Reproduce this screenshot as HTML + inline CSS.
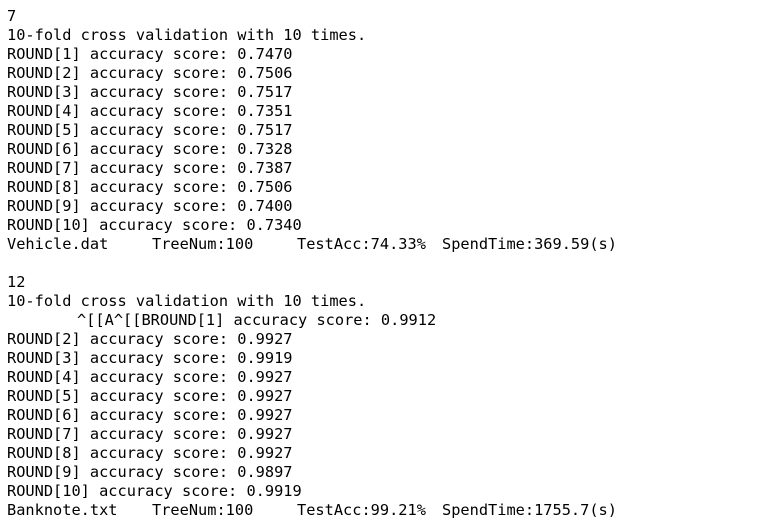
<!DOCTYPE html>
<html><head><style>
html,body{margin:0;padding:0;background:#fff;width:761px;height:531px;overflow:hidden}
.l{position:absolute;left:7px;font-family:"DejaVu Sans Mono","Liberation Mono",monospace;font-size:15.3px;line-height:19px;color:#000;white-space:pre}
</style></head><body>
<div class="l" style="top:7px">7</div>
<div class="l" style="top:26px">10-fold cross validation with 10 times.</div>
<div class="l" style="top:45px">ROUND[1] accuracy score: 0.7470</div>
<div class="l" style="top:64px">ROUND[2] accuracy score: 0.7506</div>
<div class="l" style="top:83px">ROUND[3] accuracy score: 0.7517</div>
<div class="l" style="top:102px">ROUND[4] accuracy score: 0.7351</div>
<div class="l" style="top:121px">ROUND[5] accuracy score: 0.7517</div>
<div class="l" style="top:140px">ROUND[6] accuracy score: 0.7328</div>
<div class="l" style="top:159px">ROUND[7] accuracy score: 0.7387</div>
<div class="l" style="top:178px">ROUND[8] accuracy score: 0.7506</div>
<div class="l" style="top:197px">ROUND[9] accuracy score: 0.7400</div>
<div class="l" style="top:216px">ROUND[10] accuracy score: 0.7340</div>
<div class="l" style="top:235px">Vehicle.dat</div>
<div class="l" style="top:235px;left:152px">TreeNum:100</div>
<div class="l" style="top:235px;left:297px">TestAcc:74.33%</div>
<div class="l" style="top:235px;left:442px">SpendTime:369.59(s)</div>
<div class="l" style="top:273px">12</div>
<div class="l" style="top:292px">10-fold cross validation with 10 times.</div>
<div class="l" style="top:311px;left:77px">^[[A^[[BROUND[1] accuracy score: 0.9912</div>
<div class="l" style="top:330px">ROUND[2] accuracy score: 0.9927</div>
<div class="l" style="top:349px">ROUND[3] accuracy score: 0.9919</div>
<div class="l" style="top:368px">ROUND[4] accuracy score: 0.9927</div>
<div class="l" style="top:387px">ROUND[5] accuracy score: 0.9927</div>
<div class="l" style="top:406px">ROUND[6] accuracy score: 0.9927</div>
<div class="l" style="top:425px">ROUND[7] accuracy score: 0.9927</div>
<div class="l" style="top:444px">ROUND[8] accuracy score: 0.9927</div>
<div class="l" style="top:463px">ROUND[9] accuracy score: 0.9897</div>
<div class="l" style="top:482px">ROUND[10] accuracy score: 0.9919</div>
<div class="l" style="top:501px">Banknote.txt</div>
<div class="l" style="top:501px;left:152px">TreeNum:100</div>
<div class="l" style="top:501px;left:297px">TestAcc:99.21%</div>
<div class="l" style="top:501px;left:442px">SpendTime:1755.7(s)</div>
</body></html>
